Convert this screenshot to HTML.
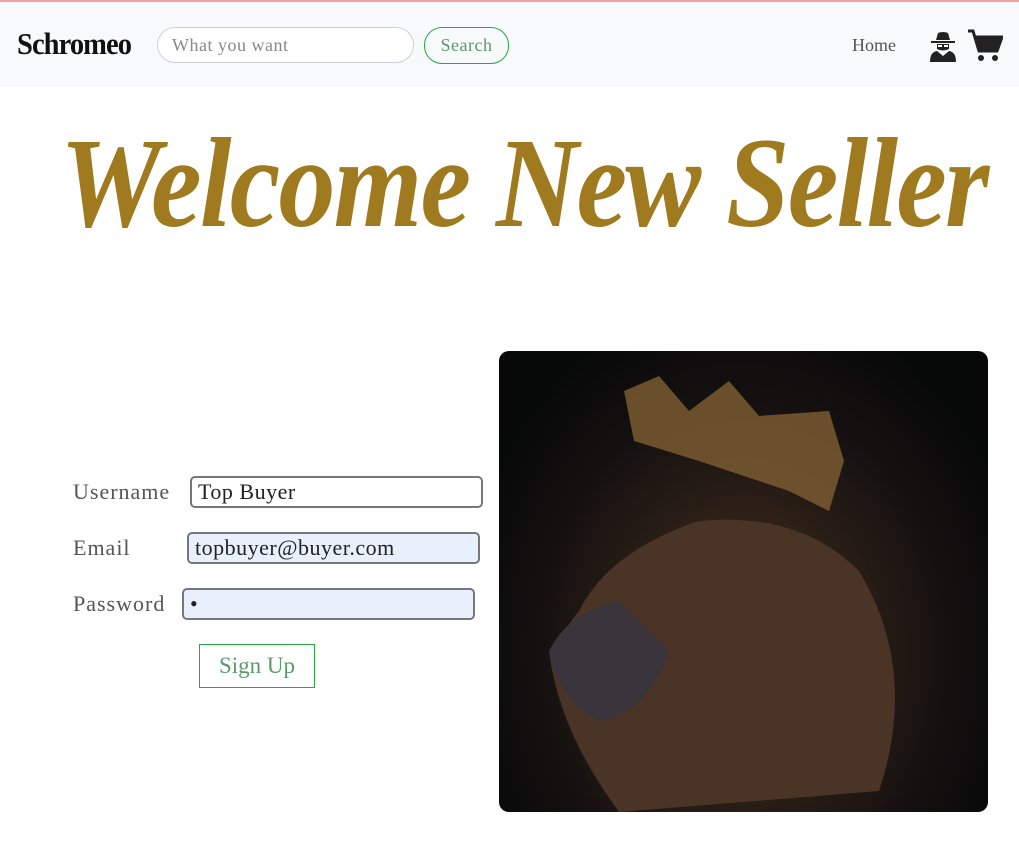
<!DOCTYPE html>
<html><head><style>
body{margin:0;width:1019px;height:849px;background:#fff;font-family:"Liberation Serif",serif;position:relative;overflow:hidden}
.nav{position:absolute;top:0;left:0;width:1019px;height:87px;background:#f8f9fa;border-top:2px solid #f4a0a0;box-sizing:border-box}
.logo{position:absolute;left:17px;top:24px;font-size:31px;font-weight:bold;color:#111;letter-spacing:-1px;transform:scaleX(0.92);transform-origin:left}
.search{position:absolute;left:157px;top:25px;width:257px;height:36px;border:1px solid #ccd0d5;border-radius:18px;background:#fff;box-sizing:border-box;padding-left:14px;line-height:34px;font-size:18px;color:#888;letter-spacing:0.5px}
.btn{position:absolute;left:424px;top:25px;width:85px;height:37px;border:1px solid #28a745;border-radius:18px;box-sizing:border-box;text-align:center;line-height:35px;font-size:18px;color:#5a9a6a;letter-spacing:0.5px}
.home{position:absolute;left:852px;top:33px;font-size:18px;color:#555}
h1{position:absolute;left:60px;top:108px;margin:0;white-space:nowrap;font-size:128px;font-style:italic;font-weight:bold;color:#a07a1e;letter-spacing:-2px;line-height:150px;transform:scaleX(0.89);transform-origin:left}
.lbl{position:absolute;font-size:22px;color:#555;letter-spacing:1px}
.inp{position:absolute;height:32px;border:2px solid #777;border-radius:5px;box-sizing:border-box;font-size:22px;line-height:28px;padding-left:6px;color:#222;letter-spacing:0.5px}
.su{position:absolute;left:199px;top:644px;width:116px;height:44px;border:1px solid #28a745;box-sizing:border-box;text-align:center;line-height:42px;font-size:23px;color:#5a9a6a}
.img{position:absolute;left:499px;top:351px;width:489px;height:461px;border-radius:10px;overflow:hidden;background:radial-gradient(ellipse at 50% 65%,#4a3424 0%,#2a1e16 35%,#141010 60%,#070808 85%),#070808}
</style></head><body>
<div class="nav">
<div class="logo">Schromeo</div>
<div class="search">What you want</div>
<div class="btn">Search</div>
<div class="home">Home</div>
<svg style="position:absolute;left:928px;top:28px" width="30" height="32" viewBox="0 0 30 32"><path d="M8 10 L10 3 Q15 1 20 3 L22 10 Z M3 11 H27 V13 H3Z M9 14 H21 V19 Q15 22 9 19Z M2 32 Q2 22 9 21 L15 26 L21 21 Q28 22 28 32Z" fill="#222"/><path d="M10 15h4v2h-4zM16 15h4v2h-4z" fill="#fff"/></svg>
<svg style="position:absolute;left:967px;top:27px" width="36" height="33" viewBox="0 0 36 33"><path d="M1 2 H6 L12 22 H30 L35 8 H8" fill="none" stroke="#222" stroke-width="3"/><path d="M8 8 H35 L30 22 H12Z" fill="#222"/><circle cx="14" cy="29" r="3" fill="#222"/><circle cx="28" cy="29" r="3" fill="#222"/></svg>
</div>
<h1>Welcome New Seller</h1>
<div class="lbl" style="left:73px;top:479px">Username</div>
<div class="inp" style="left:190px;top:476px;width:293px;background:#fff">Top Buyer</div>
<div class="lbl" style="left:73px;top:535px">Email</div>
<div class="inp" style="left:187px;top:532px;width:293px;background:#e8f0fe">topbuyer@buyer.com</div>
<div class="lbl" style="left:73px;top:591px">Password</div>
<div class="inp" style="left:182px;top:588px;width:293px;background:#e8f0fe">•</div>
<div class="su">Sign Up</div>
<div class="img">
<svg width="489" height="461" viewBox="0 0 489 461"><path d="M125 40 L160 25 L190 60 L230 30 L260 65 L330 60 L345 110 L330 160 L290 140 L200 110 L135 90Z" fill="#7a5a30" opacity="0.85"/><path d="M80 260 Q110 200 200 170 Q300 160 360 220 Q420 320 380 440 L120 461 Q60 380 50 300Z" fill="#4a3426"/><path d="M50 300 Q70 260 120 250 L170 300 Q150 360 100 370 Q60 350 50 300Z" fill="#3a343c"/></svg>
</div>
</body></html>
